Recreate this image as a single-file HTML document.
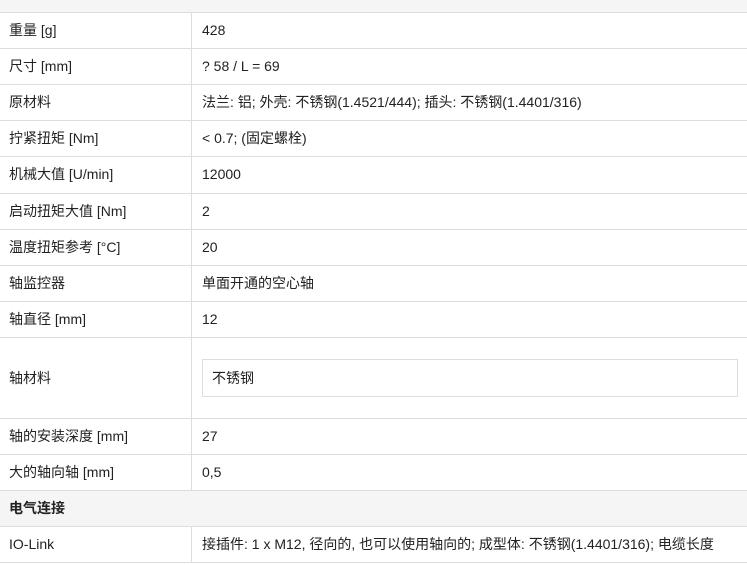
<!DOCTYPE html>
<html><head><meta charset="utf-8"><style>
body{margin:0;width:747px;height:565px;overflow:hidden;background:#fff;font-family:"Liberation Sans","Noto Sans CJK SC",sans-serif;font-size:14px;color:#222;position:relative}
.r{position:absolute;left:0;width:747px;border-bottom:1px solid #ddd;box-sizing:border-box}
.a,.b{position:absolute;top:0;line-height:35px;height:35px;white-space:nowrap}
.a{left:9px}
.b{left:202px}
.v{position:absolute;left:191px;top:0;bottom:0;border-left:1px solid #ddd}
</style></head><body>
<div class="r" style="top:0;height:13px;background:#f5f5f5"></div>
<div class="r" style="top:13px;height:36px"><div class="v"></div><span class="a">重量 [g]</span><span class="b">428</span></div>
<div class="r" style="top:49px;height:36px"><div class="v"></div><span class="a">尺寸 [mm]</span><span class="b">? 58 / L = 69</span></div>
<div class="r" style="top:85px;height:36px"><div class="v"></div><span class="a">原材料</span><span class="b">法兰: 铝; 外壳: 不锈钢(1.4521/444); 插头: 不锈钢(1.4401/316)</span></div>
<div class="r" style="top:121px;height:36px"><div class="v"></div><span class="a">拧紧扭矩 [Nm]</span><span class="b">&lt; 0.7; (固定螺栓)</span></div>
<div class="r" style="top:157px;height:37px"><div class="v"></div><span class="a">机械大值 [U/min]</span><span class="b">12000</span></div>
<div class="r" style="top:194px;height:36px"><div class="v"></div><span class="a">启动扭矩大值 [Nm]</span><span class="b">2</span></div>
<div class="r" style="top:230px;height:36px"><div class="v"></div><span class="a">温度扭矩参考 [°C]</span><span class="b">20</span></div>
<div class="r" style="top:266px;height:36px"><div class="v"></div><span class="a">轴监控器</span><span class="b">单面开通的空心轴</span></div>
<div class="r" style="top:302px;height:36px"><div class="v"></div><span class="a">轴直径 [mm]</span><span class="b">12</span></div>
<div class="r" style="top:338px;height:81px"><div class="v"></div><span class="a" style="line-height:80px;height:80px">轴材料</span><div style="position:absolute;left:202px;top:21px;width:536px;height:38px;border:1px solid #ddd;box-sizing:border-box"><span style="position:absolute;left:9px;top:0;line-height:36px">不锈钢</span></div></div>
<div class="r" style="top:419px;height:36px"><div class="v"></div><span class="a">轴的安装深度 [mm]</span><span class="b">27</span></div>
<div class="r" style="top:455px;height:36px"><div class="v"></div><span class="a">大的轴向轴 [mm]</span><span class="b">0,5</span></div>
<div class="r" style="top:491px;height:36px;background:#f5f5f5"><span class="a" style="font-weight:bold">电气连接</span></div>
<div class="r" style="top:527px;height:36px"><div class="v"></div><span class="a">IO-Link</span><span class="b">接插件: 1 x M12, 径向的, 也可以使用轴向的; 成型体: 不锈钢(1.4401/316); 电缆长度</span></div>
</body></html>
